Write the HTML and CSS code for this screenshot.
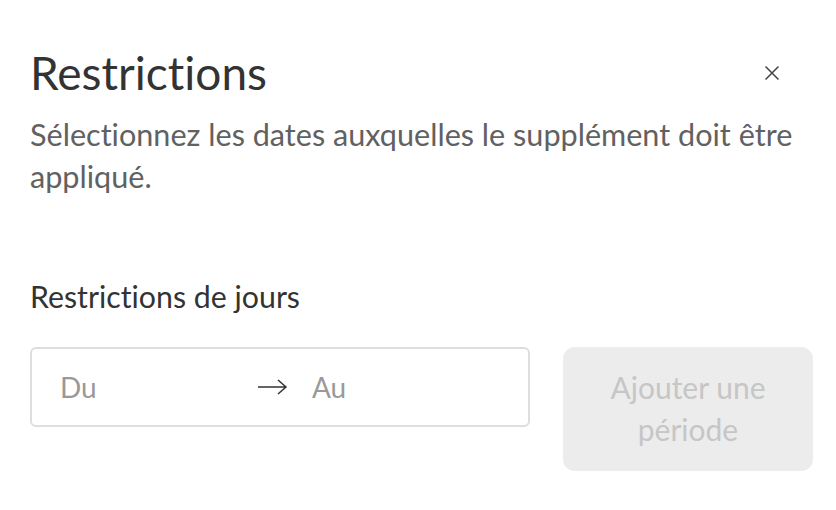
FILE: index.html
```html
<!DOCTYPE html>
<html lang="fr">
<head>
<meta charset="utf-8">
<title>Restrictions</title>
<link rel="stylesheet" href="styles.css">
</head>
<body>
<div class="dialog">
  <div class="header">
    <h1 class="title">Restrictions</h1>
    <button class="close" aria-label="Fermer">
      <svg width="14" height="14" viewBox="0 0 14 14"><path d="M0.5 0.5L13.5 13.5M13.5 0.5L0.5 13.5" stroke="#444" stroke-width="1.5" fill="none"/></svg>
    </button>
  </div>
  <p class="desc">Sélectionnez les dates auxquelles le supplément doit être appliqué.</p>
  <h2 class="subtitle">Restrictions de jours</h2>
  <div class="row">
    <div class="range">
      <span class="ph from">Du</span>
      <svg class="arrow" width="30" height="16" viewBox="0 0 30 16"><path d="M0 8H28M20 1L28 8L20 15" stroke="#333" stroke-width="1.5" fill="none"/></svg>
      <span class="ph to">Au</span>
    </div>
    <button class="add" disabled>Ajouter une période</button>
  </div>
</div>
</body>
</html>
```
FILE: styles.css
```css
html, body { margin: 0; padding: 0; background: #fff; }
body { font-family: Lato, "Noto Sans", sans-serif; font-variant-ligatures: none; }
.dialog { padding: 41px 22px 0 30px; width: 784px; }
.header { display: flex; justify-content: space-between; align-items: center; }
.title { margin: 0; font-size: 46px; font-weight: 400; color: #333; line-height: 64px; }
.close { background: none; border: 0; padding: 0; margin-right: 35px; width: 14px; height: 14px; display: flex; }
.desc { margin: 9px 0 0; font-size: 30.6px; line-height: 42px; color: #616161; width: 775px; }
.subtitle { margin: 80px 0 0; font-size: 30.3px; font-weight: 400; color: #333; line-height: 36px; }
.row { display: flex; gap: 33px; margin-top: 33px; align-items: flex-start; }
.range { flex: 0 0 auto; width: 500px; height: 80px; border: 2px solid #dedede; border-radius: 6px; display: flex; align-items: center; padding: 0 0 0 28px; box-sizing: border-box; }
.ph { font-size: 28px; color: #999; }
.from { width: 198px; }
.arrow { margin-right: 24px; flex: 0 0 auto; }
.add { flex: 0 0 auto; width: 250px; height: 124px; border: 0; border-radius: 12px; background: #ececec; color: #c6c6c6; font-family: inherit; font-size: 30px; line-height: 42px; padding: 0 30px 2px; }
```
